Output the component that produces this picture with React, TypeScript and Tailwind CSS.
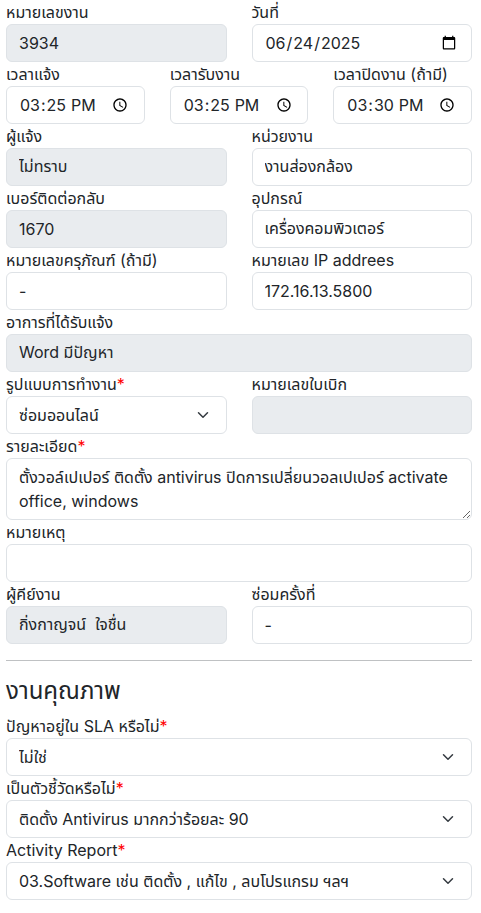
import React from "react";

const font = { fontFamily: 'Inter, "Noto Sans Thai", "Noto Sans Thai UI", "Noto Sans", sans-serif' };

const inputCls =
  "block w-full h-[38px] rounded-[6px] border border-[#dee2e6] px-3 py-[6px] text-[16px] leading-6 text-[#212529] bg-white outline-none";
const disabledCls =
  "block w-full h-[38px] rounded-[6px] border border-[#dee2e6] px-3 py-[6px] text-[16px] leading-6 text-[#212529] bg-[#e9ecef] outline-none";

function Label({ children, req }: { children: React.ReactNode; req?: boolean }) {
  return (
    <label className="block text-[16px] leading-6 text-[#212529]">
      {children}
      {req && <span className="text-[#ff0000]">*</span>}
    </label>
  );
}

function Field({
  label,
  value,
  disabled,
  req,
  type = "text",
}: {
  label: string;
  value: string;
  disabled?: boolean;
  req?: boolean;
  type?: string;
}) {
  return (
    <div>
      <Label req={req}>{label}</Label>
      <input
        type={type}
        defaultValue={value}
        className={disabled ? disabledCls : inputCls}
        style={font}
      />
    </div>
  );
}

function Chevron() {
  return (
    <svg
      className="pointer-events-none absolute right-[16px] top-1/2 -translate-y-1/2"
      width="16"
      height="12"
      viewBox="0 0 16 16"
    >
      <path
        d="M2 5l6 6 6-6"
        fill="none"
        stroke="#343a40"
        strokeWidth="2"
        strokeLinecap="round"
        strokeLinejoin="round"
      />
    </svg>
  );
}

function SelectField({ label, value, req }: { label: string; value: string; req?: boolean }) {
  return (
    <div>
      <Label req={req}>{label}</Label>
      <div className="relative">
        <select
          defaultValue={value}
          className={inputCls + " appearance-none pr-9"}
          style={font}
        >
          <option value={value}>{value}</option>
        </select>
        <Chevron />
      </div>
    </div>
  );
}

export default function App() {
  return (
    <div className="bg-white w-[481px] min-h-[913px] pl-[6px] pr-[9px]" style={font}>
      <div className="grid grid-cols-2 gap-x-[25px]">
        <Field label="หมายเลขงาน" value="3934" disabled />
        <Field label="วันที่" value="2025-06-24" type="date" />
      </div>
      <div className="grid grid-cols-3 gap-x-[25px]">
        <Field label="เวลาแจ้ง" value="15:25" type="time" />
        <Field label="เวลารับงาน" value="15:25" type="time" />
        <Field label="เวลาปิดงาน (ถ้ามี)" value="15:30" type="time" />
      </div>
      <div className="grid grid-cols-2 gap-x-[25px]">
        <Field label="ผู้แจ้ง" value="ไม่ทราบ" disabled />
        <Field label="หน่วยงาน" value="งานส่องกล้อง" />
        <Field label="เบอร์ติดต่อกลับ" value="1670" disabled />
        <Field label="อุปกรณ์" value="เครื่องคอมพิวเตอร์" />
        <Field label="หมายเลขครุภัณฑ์ (ถ้ามี)" value="-" />
        <Field label="หมายเลข IP addrees" value="172.16.13.5800" />
      </div>
      <Field label="อาการที่ได้รับแจ้ง" value="Word มีปัญหา" disabled />
      <div className="grid grid-cols-2 gap-x-[25px]">
        <SelectField label="รูปแบบการทำงาน" value="ซ่อมออนไลน์" req />
        <Field label="หมายเลขใบเบิก" value="" disabled />
      </div>
      <div>
        <Label req>รายละเอียด</Label>
        <textarea
          rows={2}
          defaultValue="ตั้งวอล์เปเปอร์ ติดตั้ง antivirus ปิดการเปลี่ยนวอลเปเปอร์ activate office, windows"
          className="block w-full h-[62px] rounded-[6px] border border-[#dee2e6] px-3 py-[6px] text-[16px] leading-6 text-[#212529] bg-white outline-none resize-y"
          style={font}
        />
      </div>
      <Field label="หมายเหตุ" value="" />
      <div className="grid grid-cols-2 gap-x-[25px]">
        <Field label="ผู้คีย์งาน" value="กิ่งกาญจน์  ใจชื่น" disabled />
        <Field label="ซ่อมครั้งที่" value="-" />
      </div>
      <hr className="my-4 border-0 border-t border-[#bfc1c3]" />
      <h4 className="text-[24px] leading-[1.2] mb-2 font-normal text-[#212529]">งานคุณภาพ</h4>
      <SelectField label="ปัญหาอยู่ใน SLA หรือไม่" value="ไม่ใช่" req />
      <SelectField label="เป็นตัวชี้วัดหรือไม่" value="ติดตั้ง Antivirus มากกว่าร้อยละ 90" req />
      <SelectField label="Activity Report" value="03.Software เช่น ติดตั้ง , แก้ไข , ลบโปรแกรม ฯลฯ" req />
    </div>
  );
}
